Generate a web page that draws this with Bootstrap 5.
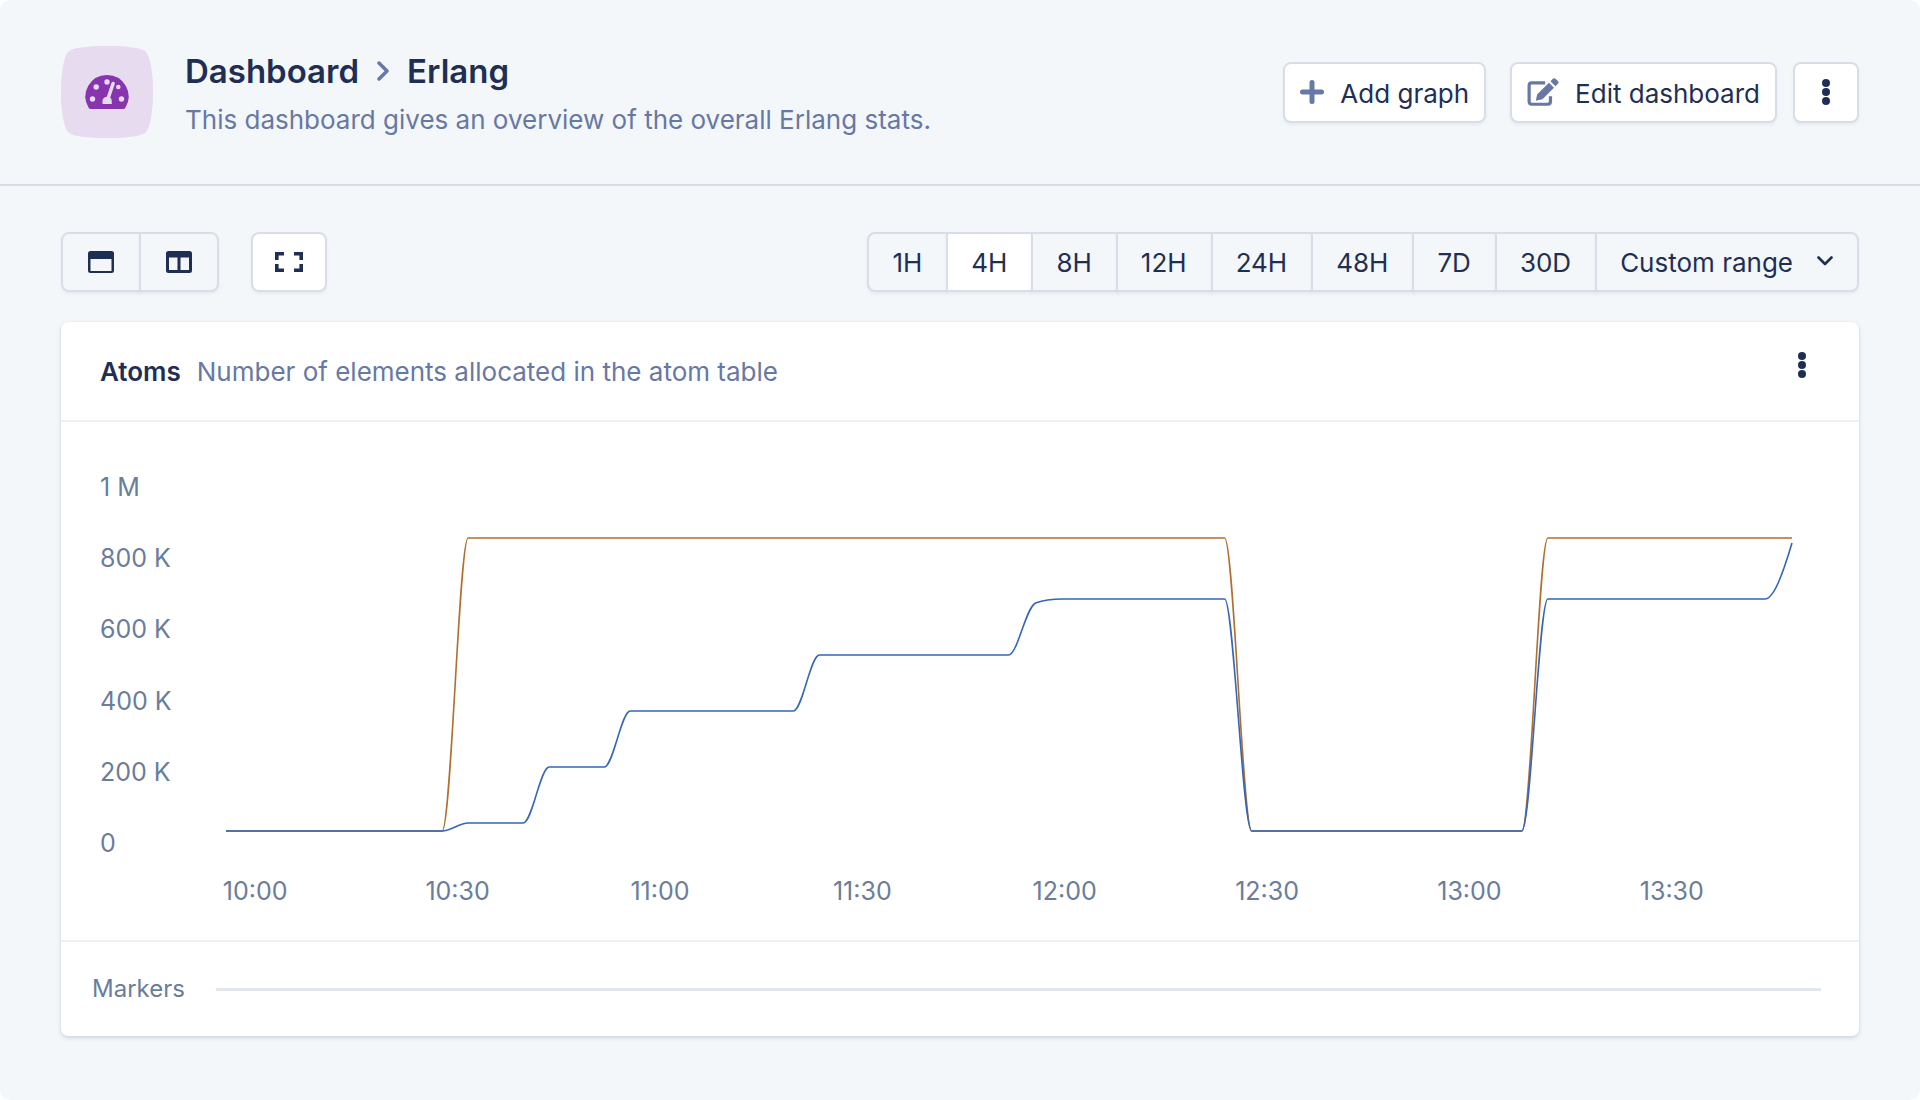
<!DOCTYPE html>
<html lang="en">
<head>
<meta charset="utf-8">
<meta name="viewport" content="width=device-width, initial-scale=1">
<title>Dashboard › Erlang</title>
<link href="https://cdn.jsdelivr.net/npm/bootstrap@5.3.0/dist/css/bootstrap.min.css" rel="stylesheet">
<style>
  :root { --ink: #1f2f54; --muted: #6878a4; --axis: #6a7d9b; --edge: #d9dde8; --page: #f3f7fa; }
  html { background: #fff; }
  body { background: var(--page); color: var(--ink); font-family: Inter, "Liberation Sans", sans-serif; font-size: 26px; line-height: 32px; border-radius: 10px; }
  svg { display: block; flex: none; }
  .gutter { padding-left: 61px; padding-right: 61px; }
  .page-head { border-bottom: 2px solid var(--edge); padding-top: 46px; padding-bottom: 46px; }
  .page-text { padding-top: 3px; }
  .page-title { font-size: 33px; line-height: 40px; font-weight: 600; gap: 18px; margin-bottom: 13px; }
  .page-title a { color: inherit; text-decoration: none; }
  .tone { color: var(--muted); }
  .tool { --bs-btn-color: var(--ink); --bs-btn-hover-color: var(--ink); --bs-btn-active-color: var(--ink);
    --bs-btn-bg: #fff; --bs-btn-hover-bg: #fff; --bs-btn-active-bg: #fff;
    --bs-btn-border-color: var(--edge); --bs-btn-hover-border-color: var(--edge); --bs-btn-active-border-color: var(--edge);
    --bs-btn-border-width: 2px; --bs-btn-border-radius: 8px; --bs-btn-font-size: 26px; --bs-btn-line-height: 32px;
    --bs-btn-padding-x: 15px; --bs-btn-padding-y: 10px;
    display: inline-flex; align-items: center; justify-content: center; box-shadow: 0 2px 3px rgba(31,47,84,.06); }
  .head-tools .tool { height: 61px; }
  .head-tools .tool span { padding-top: 4px; }
  .bar { padding-top: 46px; padding-bottom: 30px; }
  .bar .tool { height: 60px; --bs-btn-padding-x: 23px; }
  .bar .layout-tool { --bs-btn-padding-x: 25px; }
  .bar .full-tool { --bs-btn-padding-x: 22px; margin-left: 32px; }
  .bar .range-tool { padding: 12px 24px 10px 23px; }
  .bar .flat { --bs-btn-bg: var(--page); }
  .bar .btn-group > .tool:not(:first-child) { margin-left: -2px; }
  .panel { --bs-card-border-width: 0; --bs-card-border-radius: 7px; --bs-card-inner-border-radius: 7px; box-shadow: 0 2px 4px rgba(31,47,84,.16), 0 0 2px rgba(31,47,84,.08); color: inherit; }
  .panel-head { padding: 30px 40px 32px 39px; border-bottom: 2px solid #edf1f6; }
  .panel-title { font-size: 26px; line-height: 32px; font-weight: 600; }
  .more { width: 34px; height: 26px; --bs-btn-padding-x: 0; --bs-btn-padding-y: 0; --bs-btn-border-width: 0; }
  .chart { color: var(--axis); font-size: 25px; line-height: 30px; padding: 50px 67px 34px 39px; }
  .y-axis { width: 126px; }
  .plot { padding: 15px 0; min-width: 0; }
  .plot svg { width: 100%; height: 356px; overflow: visible; }
  .plot path { fill: none; stroke-width: 1.6px; vector-effect: non-scaling-stroke; }
  .x-axis { margin: 18px 19px 0 54px; }
  .markers { color: var(--axis); font-size: 24px; line-height: 30px; padding: 32px 38px 32px 31px; border-top: 2px solid #edf1f6; gap: 31px; }
  .rule { height: 3px; background: #e3e6ec; }
</style>
</head>
<body class="min-vh-100">
<header class="page-head gutter d-flex align-items-center justify-content-between">
  <div class="d-flex align-items-center">
    <svg width="92" height="92" viewBox="0 0 92 92" aria-hidden="true">
      <path fill="#e7dbef" d="M46 0C66 0 80 2 84 5C89 9 92 26 92 46S89 83 84 87C80 90 66 92 46 92S12 90 8 87C3 83 0 66 0 46S3 9 8 5C12 2 26 0 46 0Z"/>
      <path fill="#8735ae" d="M46 29A21.500 21.500 0 0 0 27.500 61.500Q28.300 63 30 63H62Q63.700 63 64.500 61.500A21.500 21.500 0 0 0 46 29Z"/>
      <g fill="#e7dbef"><circle cx="31.500" cy="53" r="2.700"/><circle cx="35.200" cy="41" r="2.700"/><circle cx="46" cy="36" r="2.700"/><circle cx="57.300" cy="41" r="2.300"/><circle cx="60.500" cy="53" r="2.700"/>
      <path d="M41.500 58V55Q41.500 51.500 45.800 50.700L50.500 36.800Q51.300 35.400 52.800 35.800Q54.200 36.400 53.800 38L49.200 51.600Q50.800 53 50.800 55V58Z"/></g>
    </svg>
    <div class="page-text ms-4 ps-2">
      <h1 class="page-title d-flex align-items-center">
        <a href="#">Dashboard</a>
        <svg width="12" height="20" viewBox="0 0 12 20" fill="none" stroke="#6878a4" stroke-width="3.500" stroke-linecap="round" stroke-linejoin="round" aria-hidden="true"><path d="M2 2L10 10L2 18"/></svg>
        <span>Erlang</span>
      </h1>
      <p class="tone mb-0">This dashboard gives an overview of the overall Erlang stats.</p>
    </div>
  </div>
  <div class="head-tools d-flex">
    <button type="button" class="btn tool gap-3">
      <svg width="24" height="24" viewBox="0 0 24 24" fill="none" stroke="#6878a4" stroke-width="5" stroke-linecap="round" aria-hidden="true"><path d="M12 2.500V21.500M2.500 12H21.500"/></svg>
      <span>Add graph</span>
    </button>
    <button type="button" class="btn tool gap-3 ms-4">
      <svg width="32" height="30" viewBox="0 0 30 28" aria-hidden="true">
        <path d="M17 5.500H4.500Q2 5.500 2 8V23Q2 25.500 4.500 25.500H19.500Q22 25.500 22 23V18" fill="none" stroke="#6878a4" stroke-width="3"/>
        <path fill="#6878a4" d="M20.600 5.300L25.300 9.900L14.500 20.700L9.200 22Q8.200 22.200 8.400 21.200L9.600 16.200ZM22 3.900L24.300 1.600Q25.500.500 26.700 1.600L29 3.800Q30.200 5 29 6.200L26.700 8.500Z"/>
      </svg>
      <span>Edit dashboard</span>
    </button>
    <button type="button" class="btn tool ms-3 px-4" aria-label="More actions">
      <svg width="14" height="26" viewBox="0 0 14 26" fill="#1f2f54" aria-hidden="true"><circle cx="7" cy="4" r="4"/><circle cx="7" cy="13" r="4"/><circle cx="7" cy="22" r="4"/></svg>
    </button>
  </div>
</header>

<main class="gutter">
  <div class="bar d-flex justify-content-between">
    <div class="d-flex">
      <div class="btn-group" role="group" aria-label="Layout">
        <button type="button" class="btn tool flat layout-tool" aria-label="One column">
          <svg width="26" height="22" viewBox="0 0 26 22" aria-hidden="true"><path fill="#1f2f54" fill-rule="evenodd" d="M2.500 0H23.500Q26 0 26 2.500V19.500Q26 22 23.500 22H2.500Q0 22 0 19.500V2.500Q0 0 2.500 0ZM2.500 8V20H23.500V8Z"/></svg>
        </button>
        <button type="button" class="btn tool flat layout-tool" aria-label="Two columns">
          <svg width="26" height="22" viewBox="0 0 26 22" aria-hidden="true"><path fill="#1f2f54" fill-rule="evenodd" d="M2.500 0H23.500Q26 0 26 2.500V19.500Q26 22 23.500 22H2.500Q0 22 0 19.500V2.500Q0 0 2.500 0ZM3 6.500V19H11.500V6.500ZM14.500 6.500V19H23V6.500Z"/></svg>
        </button>
      </div>
      <button type="button" class="btn tool full-tool" aria-label="Full screen">
        <svg width="28" height="20" viewBox="0 0 28 20" fill="none" stroke="#1f2f54" stroke-width="3.600" aria-hidden="true"><path d="M9 1.800H1.800V8M19 1.800H26.200V8M9 18.200H1.800V12M19 18.200H26.200V12"/></svg>
      </button>
    </div>
    <div class="btn-group" role="group" aria-label="Time range">
      <button type="button" class="btn tool flat range-tool">1H</button>
      <button type="button" class="btn tool range-tool" aria-pressed="true">4H</button>
      <button type="button" class="btn tool flat range-tool">8H</button>
      <button type="button" class="btn tool flat range-tool">12H</button>
      <button type="button" class="btn tool flat range-tool">24H</button>
      <button type="button" class="btn tool flat range-tool">48H</button>
      <button type="button" class="btn tool flat range-tool">7D</button>
      <button type="button" class="btn tool flat range-tool">30D</button>
      <button type="button" class="btn tool flat range-tool gap-4">Custom range
        <svg width="16" height="14" viewBox="0 0 16 14" fill="none" stroke="#1f2f54" stroke-width="2.600" stroke-linecap="round" stroke-linejoin="round" aria-hidden="true"><path d="M1.500 1.500L8 8L14.500 1.500"/></svg>
      </button>
    </div>
  </div>

  <section class="card panel">
    <div class="panel-head d-flex align-items-start justify-content-between">
      <div class="d-flex gap-3 pt-1"><h2 class="panel-title mb-0">Atoms</h2><span class="tone">Number of elements allocated in the atom table</span></div>
      <button type="button" class="btn more d-flex justify-content-center" aria-label="Graph options">
        <svg width="8" height="26" viewBox="0 0 8 26" fill="#1f2f54" aria-hidden="true"><circle cx="4" cy="4" r="4"/><circle cx="4" cy="13" r="4"/><circle cx="4" cy="22" r="4"/></svg>
      </button>
    </div>
    <div class="chart">
      <div class="d-flex">
        <div class="y-axis d-flex flex-column justify-content-between">
          <span>1 M</span><span>800 K</span><span>600 K</span><span>400 K</span><span>200 K</span><span>0</span>
        </div>
        <div class="plot flex-grow-1">
          <svg viewBox="0 0 1565 356" preserveAspectRatio="none" role="img" aria-label="Atom limit and atom count from 10:00 to 13:45">
            <path stroke="#b06f2f" d="M0 344H216C225 344 233 51 242 51H998C1007 51 1016 344 1025 344H1295C1304 344 1312 51 1321 51H1565"/>
            <path stroke="#3566b8" d="M0 344H216C225 344 233 336 242 336H297C306 336 314 280 323 280H378C387 280 395 224 404 224H567C576 224 584 168 593 168H782C791 168 799 121 809 116Q820 112 836 112H998C1007 112 1016 344 1025 344H1295C1304 344 1312 112 1321 112H1538C1547 112 1556 86 1565 56"/>
          </svg>
        </div>
      </div>
      <div class="x-axis row g-0 text-center">
        <span class="col">10:00</span><span class="col">10:30</span><span class="col">11:00</span><span class="col">11:30</span><span class="col">12:00</span><span class="col">12:30</span><span class="col">13:00</span><span class="col">13:30</span>
      </div>
    </div>
    <div class="markers d-flex align-items-center">
      <span>Markers</span>
      <div class="rule flex-grow-1"></div>
    </div>
  </section>
</main>
<script src="https://cdn.jsdelivr.net/npm/bootstrap@5.3.0/dist/js/bootstrap.bundle.min.js"></script>
</body>
</html>
